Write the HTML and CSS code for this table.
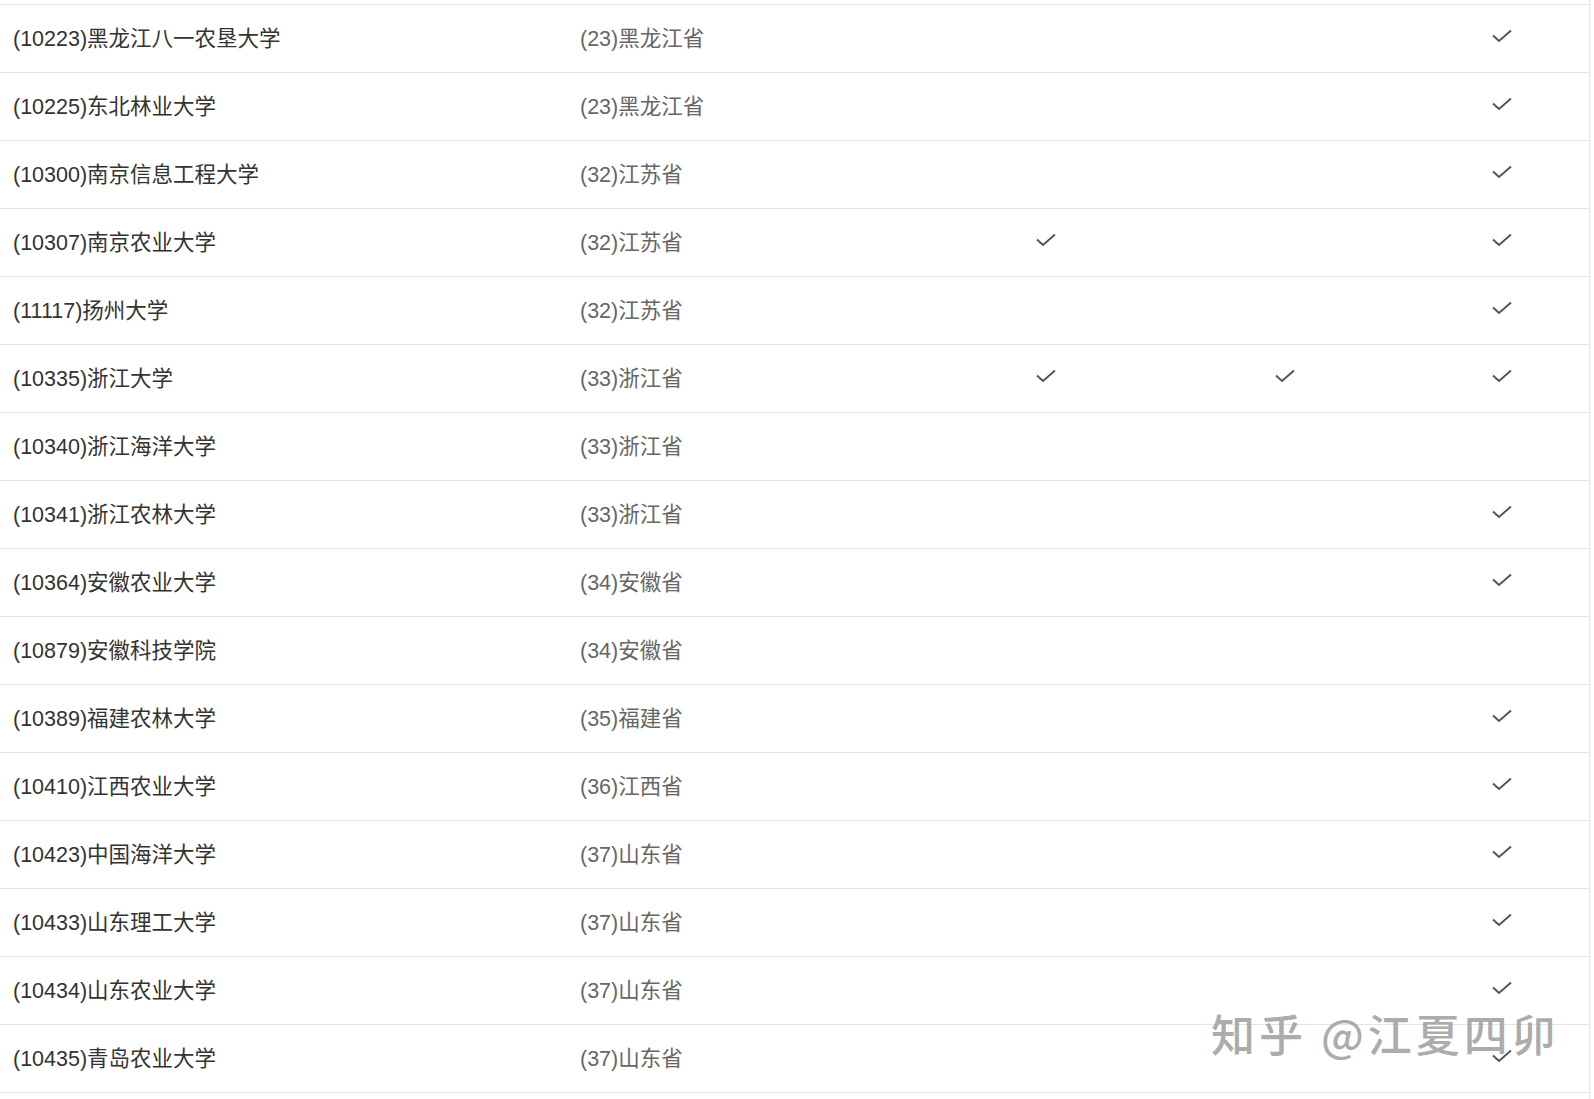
FILE: index.html
```html
<!DOCTYPE html>
<html lang="zh-CN">
<head>
<meta charset="utf-8">
<link rel="stylesheet" href="styles.css">
</head>
<body>
<div class="sheet">
  <div class="table" id="t">
    <div class="row"><div class="c name">(10223)黑龙江八一农垦大学</div><div class="c prov">(23)黑龙江省</div><div class="c k"></div><div class="c k"></div><div class="c k k5"><svg class="chk" viewBox="0 0 20 14"><path d="M1 6.5 L7 12 L19 1.5"/></svg></div></div>
    <div class="row"><div class="c name">(10225)东北林业大学</div><div class="c prov">(23)黑龙江省</div><div class="c k"></div><div class="c k"></div><div class="c k k5"><svg class="chk" viewBox="0 0 20 14"><path d="M1 6.5 L7 12 L19 1.5"/></svg></div></div>
    <div class="row"><div class="c name">(10300)南京信息工程大学</div><div class="c prov">(32)江苏省</div><div class="c k"></div><div class="c k"></div><div class="c k k5"><svg class="chk" viewBox="0 0 20 14"><path d="M1 6.5 L7 12 L19 1.5"/></svg></div></div>
    <div class="row"><div class="c name">(10307)南京农业大学</div><div class="c prov">(32)江苏省</div><div class="c k"><svg class="chk" viewBox="0 0 20 14"><path d="M1 6.5 L7 12 L19 1.5"/></svg></div><div class="c k"></div><div class="c k k5"><svg class="chk" viewBox="0 0 20 14"><path d="M1 6.5 L7 12 L19 1.5"/></svg></div></div>
    <div class="row"><div class="c name">(11117)扬州大学</div><div class="c prov">(32)江苏省</div><div class="c k"></div><div class="c k"></div><div class="c k k5"><svg class="chk" viewBox="0 0 20 14"><path d="M1 6.5 L7 12 L19 1.5"/></svg></div></div>
    <div class="row"><div class="c name">(10335)浙江大学</div><div class="c prov">(33)浙江省</div><div class="c k"><svg class="chk" viewBox="0 0 20 14"><path d="M1 6.5 L7 12 L19 1.5"/></svg></div><div class="c k"><svg class="chk" viewBox="0 0 20 14"><path d="M1 6.5 L7 12 L19 1.5"/></svg></div><div class="c k k5"><svg class="chk" viewBox="0 0 20 14"><path d="M1 6.5 L7 12 L19 1.5"/></svg></div></div>
    <div class="row"><div class="c name">(10340)浙江海洋大学</div><div class="c prov">(33)浙江省</div><div class="c k"></div><div class="c k"></div><div class="c k k5"></div></div>
    <div class="row"><div class="c name">(10341)浙江农林大学</div><div class="c prov">(33)浙江省</div><div class="c k"></div><div class="c k"></div><div class="c k k5"><svg class="chk" viewBox="0 0 20 14"><path d="M1 6.5 L7 12 L19 1.5"/></svg></div></div>
    <div class="row"><div class="c name">(10364)安徽农业大学</div><div class="c prov">(34)安徽省</div><div class="c k"></div><div class="c k"></div><div class="c k k5"><svg class="chk" viewBox="0 0 20 14"><path d="M1 6.5 L7 12 L19 1.5"/></svg></div></div>
    <div class="row"><div class="c name">(10879)安徽科技学院</div><div class="c prov">(34)安徽省</div><div class="c k"></div><div class="c k"></div><div class="c k k5"></div></div>
    <div class="row"><div class="c name">(10389)福建农林大学</div><div class="c prov">(35)福建省</div><div class="c k"></div><div class="c k"></div><div class="c k k5"><svg class="chk" viewBox="0 0 20 14"><path d="M1 6.5 L7 12 L19 1.5"/></svg></div></div>
    <div class="row"><div class="c name">(10410)江西农业大学</div><div class="c prov">(36)江西省</div><div class="c k"></div><div class="c k"></div><div class="c k k5"><svg class="chk" viewBox="0 0 20 14"><path d="M1 6.5 L7 12 L19 1.5"/></svg></div></div>
    <div class="row"><div class="c name">(10423)中国海洋大学</div><div class="c prov">(37)山东省</div><div class="c k"></div><div class="c k"></div><div class="c k k5"><svg class="chk" viewBox="0 0 20 14"><path d="M1 6.5 L7 12 L19 1.5"/></svg></div></div>
    <div class="row"><div class="c name">(10433)山东理工大学</div><div class="c prov">(37)山东省</div><div class="c k"></div><div class="c k"></div><div class="c k k5"><svg class="chk" viewBox="0 0 20 14"><path d="M1 6.5 L7 12 L19 1.5"/></svg></div></div>
    <div class="row"><div class="c name">(10434)山东农业大学</div><div class="c prov">(37)山东省</div><div class="c k"></div><div class="c k"></div><div class="c k k5"><svg class="chk" viewBox="0 0 20 14"><path d="M1 6.5 L7 12 L19 1.5"/></svg></div></div>
    <div class="row"><div class="c name">(10435)青岛农业大学</div><div class="c prov">(37)山东省</div><div class="c k"></div><div class="c k"></div><div class="c k k5"><svg class="chk" viewBox="0 0 20 14"><path d="M1 6.5 L7 12 L19 1.5"/></svg></div></div>
  </div>
  <div class="watermark">知乎 @江夏四卯</div>
</div>
</body>
</html>
```
FILE: styles.css
```css
html, body {
  margin: 0;
  padding: 0;
  background: #fff;
}
body {
  width: 1594px;
  height: 1099px;
  overflow: hidden;
  font-family: "Liberation Sans", "Noto Sans CJK SC", sans-serif;
}
.sheet {
  position: relative;
  width: 1590px;
  height: 1099px;
  border-right: 1px solid #e6e6e6;
  padding-top: 4px;
  box-sizing: border-box;
}
.table {
  border-top: 1px solid #e4e4e4;
}
.row {
  display: grid;
  grid-template-columns: 566px 364px 232px 246px 181px;
  height: 68px;
  box-sizing: border-box;
  border-bottom: 1px solid #e4e4e4;
}
.c {
  display: flex;
  align-items: center;
  font-size: 21.5px;
  white-space: nowrap;
  padding-bottom: 4px;
}
.name {
  padding-left: 13px;
  color: #333;
}
.prov {
  padding-left: 14px;
  color: #666;
}
.k {
  justify-content: center;
}
.k5 {
  padding-left: 6px;
}
.chk {
  width: 20px;
  height: 14px;
  margin-top: -2px;
  fill: none;
  stroke: #555;
  stroke-width: 2;
}
.watermark {
  position: absolute;
  left: 1211px;
  top: 1005px;
  font-family: "Noto Sans CJK SC", sans-serif;
  font-size: 44px;
  font-weight: 500;
  color: rgba(150, 150, 150, 0.8);
  letter-spacing: 4px;
  white-space: nowrap;
  line-height: 56px;
}
```
